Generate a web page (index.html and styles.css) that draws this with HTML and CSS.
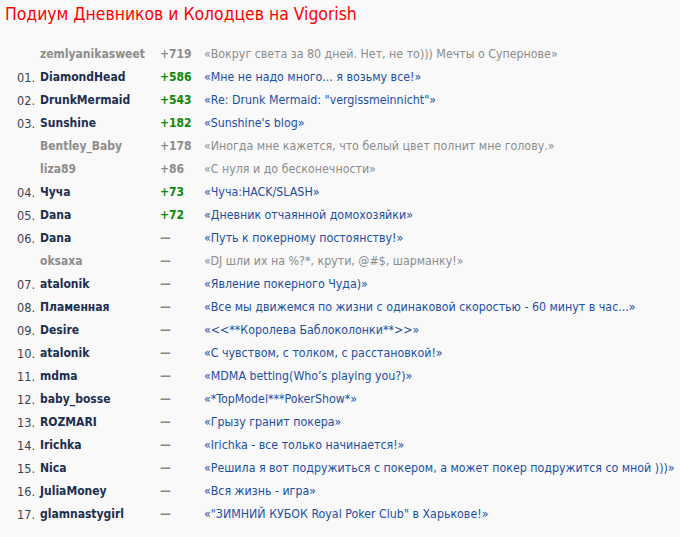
FILE: index.html
```html
<!DOCTYPE html>
<html lang="ru">
<head>
<meta charset="utf-8">
<link rel="stylesheet" href="styles.css">
</head>
<body>
<h1 class="title">Подиум Дневников и Колодцев на Vigorish</h1>
<div class="list">
  <div class="row off"><span class="rank"></span><span class="name">zemlyanikasweet</span><span class="score">+719</span><span class="quote">«Вокруг света за 80 дней. Нет, не то))) Мечты о Супернове»</span></div>
  <div class="row"><span class="rank">01.</span><span class="name">DiamondHead</span><span class="score up">+586</span><span class="quote">«Мне не надо много... я возьму все!»</span></div>
  <div class="row"><span class="rank">02.</span><span class="name">DrunkMermaid</span><span class="score up">+543</span><span class="quote">«Re: Drunk Mermaid: "vergissmeinnicht"»</span></div>
  <div class="row"><span class="rank">03.</span><span class="name">Sunshine</span><span class="score up">+182</span><span class="quote">«Sunshine's blog»</span></div>
  <div class="row off"><span class="rank"></span><span class="name">Bentley_Baby</span><span class="score">+178</span><span class="quote">«Иногда мне кажется, что белый цвет полнит мне голову.»</span></div>
  <div class="row off"><span class="rank"></span><span class="name">liza89</span><span class="score">+86</span><span class="quote">«С нуля и до бесконечности»</span></div>
  <div class="row"><span class="rank">04.</span><span class="name">Чуча</span><span class="score up">+73</span><span class="quote">«Чуча:HACK/SLASH»</span></div>
  <div class="row"><span class="rank">05.</span><span class="name">Dana</span><span class="score up">+72</span><span class="quote">«Дневник отчаянной домохозяйки»</span></div>
  <div class="row"><span class="rank">06.</span><span class="name">Dana</span><span class="score">—</span><span class="quote">«Путь к покерному постоянству!»</span></div>
  <div class="row off"><span class="rank"></span><span class="name">oksaxa</span><span class="score">—</span><span class="quote">«DJ шли их на %?*, крути, @#$, шарманку!»</span></div>
  <div class="row"><span class="rank">07.</span><span class="name">atalonik</span><span class="score">—</span><span class="quote">«Явление покерного Чуда)»</span></div>
  <div class="row"><span class="rank">08.</span><span class="name">Пламенная</span><span class="score">—</span><span class="quote">«Все мы движемся по жизни с одинаковой скоростью - 60 минут в час...»</span></div>
  <div class="row"><span class="rank">09.</span><span class="name">Desire</span><span class="score">—</span><span class="quote">«&lt;&lt;**Королева Баблоколонки**&gt;&gt;»</span></div>
  <div class="row"><span class="rank">10.</span><span class="name">atalonik</span><span class="score">—</span><span class="quote">«С чувством, с толком, с расстановкой!»</span></div>
  <div class="row"><span class="rank">11.</span><span class="name">mdma</span><span class="score">—</span><span class="quote">«MDMA betting(Who’s playing you?)»</span></div>
  <div class="row"><span class="rank">12.</span><span class="name">baby_bosse</span><span class="score">—</span><span class="quote">«*TopModel***PokerShow*»</span></div>
  <div class="row"><span class="rank">13.</span><span class="name">ROZMARI</span><span class="score">—</span><span class="quote">«Грызу гранит покера»</span></div>
  <div class="row"><span class="rank">14.</span><span class="name">Irichka</span><span class="score">—</span><span class="quote">«Irichka - все только начинается!»</span></div>
  <div class="row"><span class="rank">15.</span><span class="name">Nica</span><span class="score">—</span><span class="quote">«Решила я вот подружиться с покером, а может покер подружится со мной )))»</span></div>
  <div class="row"><span class="rank">16.</span><span class="name">JuliaMoney</span><span class="score">—</span><span class="quote">«Вся жизнь - игра»</span></div>
  <div class="row"><span class="rank">17.</span><span class="name">glamnastygirl</span><span class="score">—</span><span class="quote">«"ЗИМНИЙ КУБОК Royal Poker Club" в Харькове!»</span></div>
</div>
</body>
</html>
```

FILE: styles.css
```css
html, body {
  margin: 0;
  padding: 0;
  background: #f9f9f9;
}
body {
  font-family: "DejaVu Sans Condensed", Tahoma, "DejaVu Sans", sans-serif;
  font-size: 12px;
  color: #333;
}
.title {
  margin: 0;
  padding: 3px 0 0 5px;
  height: 24px;
  font-size: 17.4px;
  font-weight: normal;
  color: #ff0000;
  line-height: 22px;
}
.list {
  padding-top: 16px;
}
.row {
  display: grid;
  grid-template-columns: 36px 124px 44px 1fr;
  height: 23px;
  line-height: 23px;
  white-space: nowrap;
}
.rank {
  text-align: right;
  padding-right: 1px;
  margin-left: -3px;
  font-size: 12.6px;
  color: #3a4250;
}
.name {
  font-weight: bold;
  color: #1c2e4f;
  padding-left: 4px;
}
.score {
  font-weight: bold;
  color: #888;
}
.score.up {
  color: #0a8a0a;
}
.quote {
  color: #1c4fa3;
  font-size: 12.3px;
}
.row.off .name,
.row.off .score,
.row.off .quote {
  color: #8c8c8c;
}
```
